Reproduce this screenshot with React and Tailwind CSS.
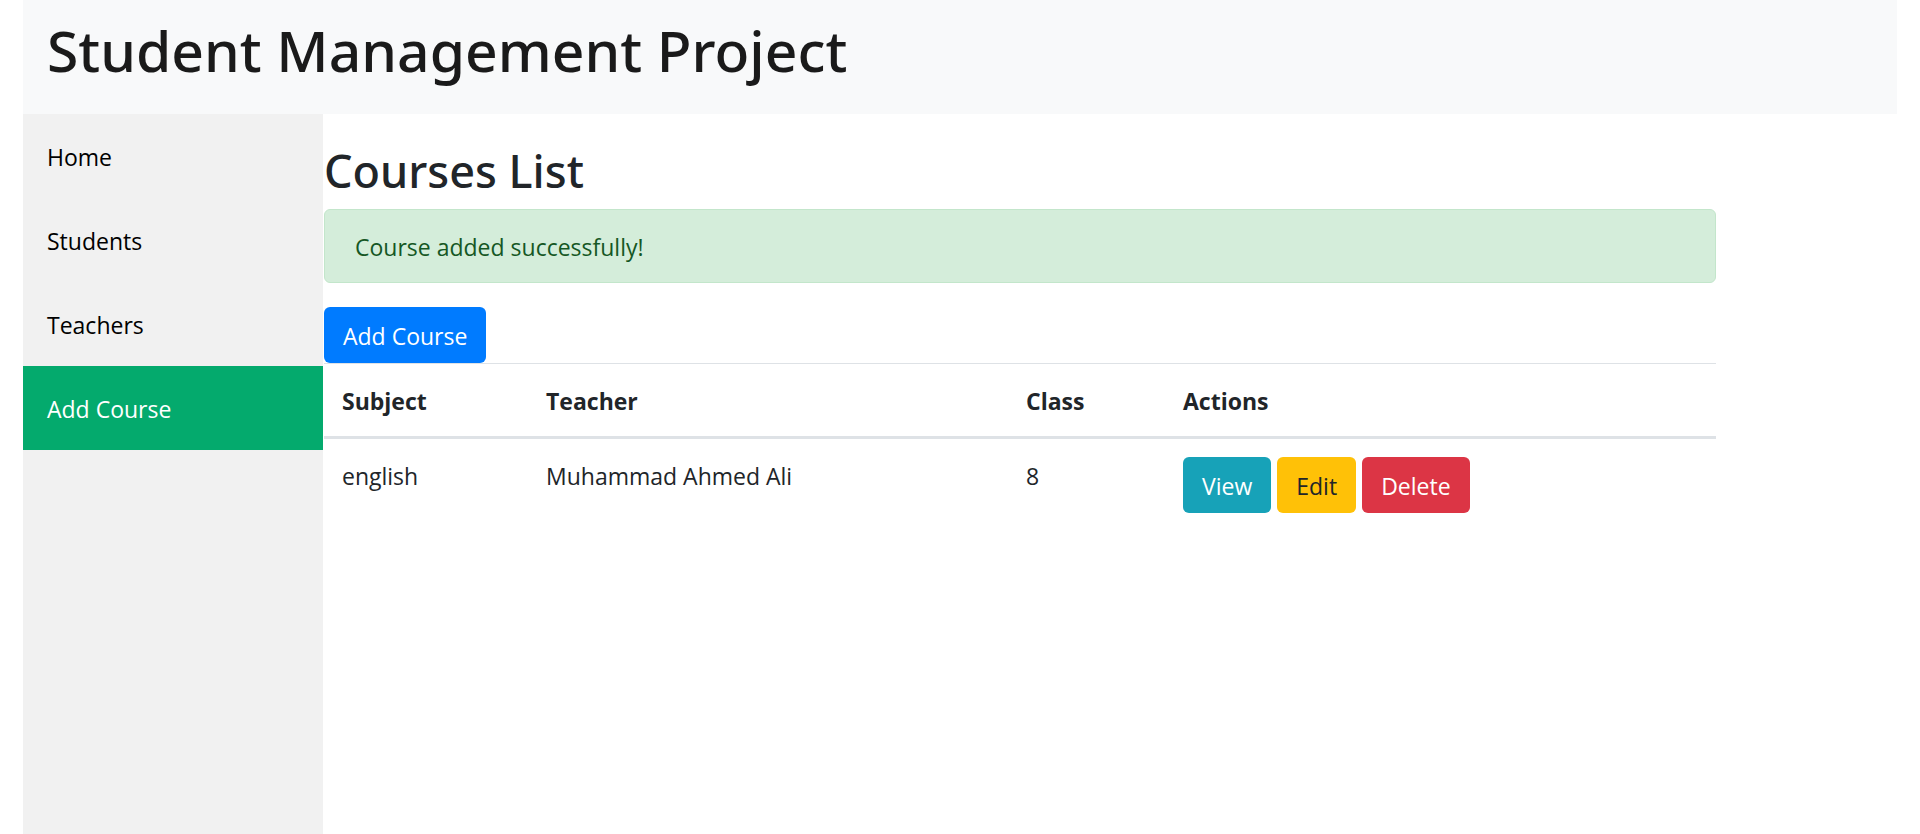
const navItems = [
  { label: "Home" },
  { label: "Students" },
  { label: "Teachers" },
  { label: "Add Course", active: true },
];

const courses = [{ subject: "english", teacher: "Muhammad Ahmed Ali", grade: "8" }];

const cell = "px-[18px] pt-[19px] pb-[17px]";

function Button({ className, children }) {
  return (
    <button type="button" className={`h-14 cursor-pointer rounded-md px-[19px] pt-0.5 leading-9 ${className}`}>
      {children}
    </button>
  );
}

export default function App() {
  return (
    <div className="flex min-h-screen flex-col bg-white px-[23px] font-['Open_Sans','Noto_Sans',sans-serif] text-[23px] leading-9 text-[#212529]">
      <header className="bg-[#f8f9fa] px-6 pt-3.5 pb-7">
        <h1 className="font-['Noto_Sans',sans-serif] text-[57px] leading-[72px] font-medium text-[#1a1a1a]">
          Student Management Project
        </h1>
      </header>
      <div className="flex flex-1">
        <nav className="w-[300px] shrink-0 bg-[#f1f1f1]">
          <ul>
            {navItems.map((item) => (
              <li key={item.label}>
                <a
                  href="#"
                  aria-current={item.active ? "page" : undefined}
                  className={`block px-6 pt-[25px] pb-[23px] ${item.active ? "bg-[#04aa6d] text-white" : "text-black"}`}
                >
                  {item.label}
                </a>
              </li>
            ))}
          </ul>
        </nav>
        <main className="mr-[181px] ml-px flex-1 pt-7">
          <h2 className="font-['Noto_Sans',sans-serif] text-[45px] leading-[58px] font-medium">Courses List</h2>
          <div role="status" className="mt-[9px] mb-6 rounded-md border border-[#c3e6cb] bg-[#d4edda] px-[30px] pt-[19px] pb-[17px] text-[#155724]">
            Course added successfully!
          </div>
          <Button className="block bg-[#007bff] text-white">Add Course</Button>
          <table className="w-full table-fixed border-collapse text-left">
            <colgroup>
              <col className="w-[204px]" />
              <col className="w-[480px]" />
              <col className="w-[157px]" />
              <col />
            </colgroup>
            <thead>
              <tr className="border-t border-b-3 border-[#dee2e6]">
                <th className={`${cell} font-bold`}>Subject</th>
                <th className={`${cell} font-bold`}>Teacher</th>
                <th className={`${cell} font-bold`}>Class</th>
                <th className={`${cell} font-bold`}>Actions</th>
              </tr>
            </thead>
            <tbody>
              {courses.map((course) => (
                <tr key={course.subject} className="align-top">
                  <td className={cell}>{course.subject}</td>
                  <td className={cell}>{course.teacher}</td>
                  <td className={cell}>{course.grade}</td>
                  <td className="p-[18px]">
                    <div className="flex gap-1.5">
                      <Button className="bg-[#17a2b8] text-white">View</Button>
                      <Button className="bg-[#ffc107] text-[#212529]">Edit</Button>
                      <Button className="bg-[#dc3545] text-white">Delete</Button>
                    </div>
                  </td>
                </tr>
              ))}
            </tbody>
          </table>
        </main>
      </div>
    </div>
  );
}
